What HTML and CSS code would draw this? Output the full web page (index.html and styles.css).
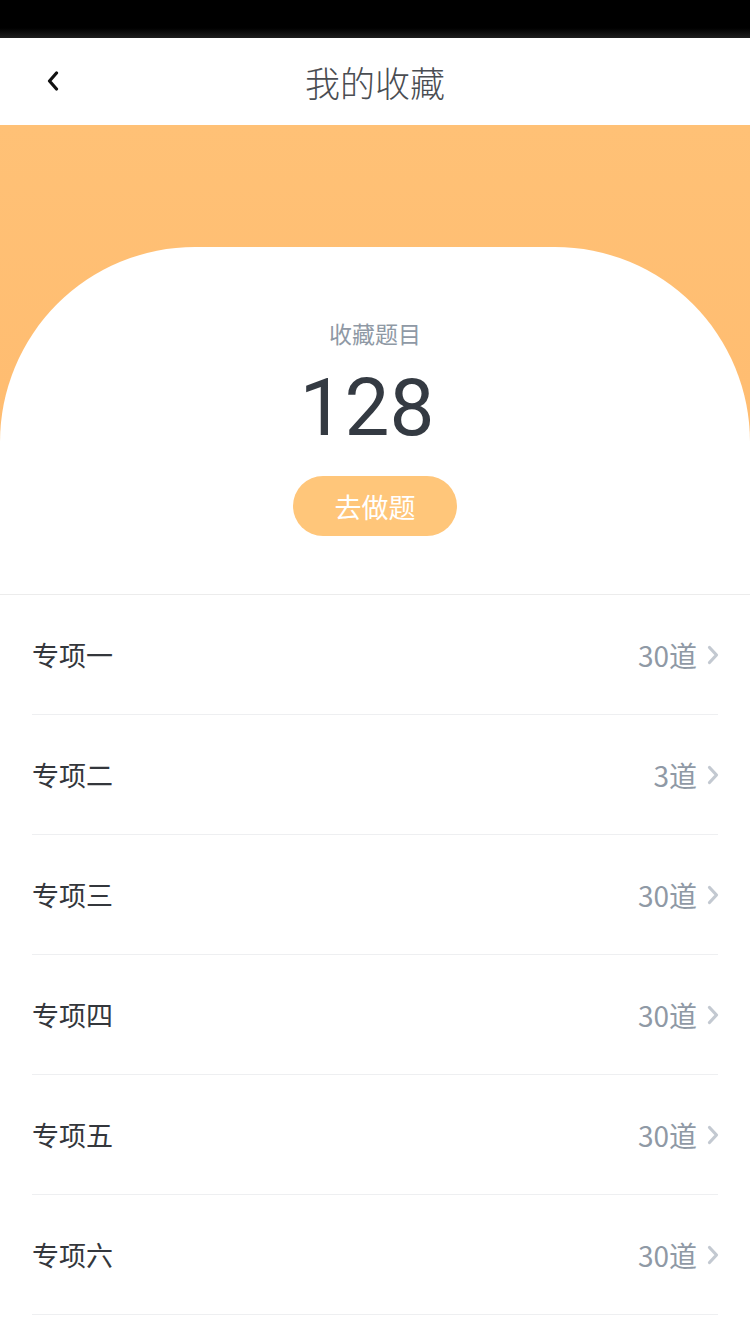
FILE: index.html
```html
<!DOCTYPE html>
<html lang="zh">
<head>
<meta charset="utf-8">
<title>我的收藏</title>
<link rel="stylesheet" href="styles.css">
</head>
<body>
<div class="statusbar"></div>
<header class="header">
  <a class="back" href="#">
    <svg width="14" height="20" viewBox="0 0 14 20"><path d="M10.5 2 L3.5 10 L10.5 18" fill="none" stroke="#111" stroke-width="3.2" stroke-linecap="round" stroke-linejoin="round"/></svg>
  </a>
  <h1 class="title">我的收藏</h1>
</header>
<section class="hero">
  <div class="card">
    <div class="card-label">收藏题目</div>
    <div class="card-num">128</div>
    <button class="btn">去做题</button>
  </div>
</section>
<ul class="list">
  <li class="row"><span class="name">专项一</span><span class="count">30道</span><svg class="chev" width="14" height="22" viewBox="0 0 14 22"><path d="M3.5 3.5 L10.5 11 L3.5 18.5" fill="none" stroke="#c3c9d1" stroke-width="3.2" stroke-linecap="round" stroke-linejoin="round"/></svg></li>
  <li class="row"><span class="name">专项二</span><span class="count">3道</span><svg class="chev" width="14" height="22" viewBox="0 0 14 22"><path d="M3.5 3.5 L10.5 11 L3.5 18.5" fill="none" stroke="#c3c9d1" stroke-width="3.2" stroke-linecap="round" stroke-linejoin="round"/></svg></li>
  <li class="row"><span class="name">专项三</span><span class="count">30道</span><svg class="chev" width="14" height="22" viewBox="0 0 14 22"><path d="M3.5 3.5 L10.5 11 L3.5 18.5" fill="none" stroke="#c3c9d1" stroke-width="3.2" stroke-linecap="round" stroke-linejoin="round"/></svg></li>
  <li class="row"><span class="name">专项四</span><span class="count">30道</span><svg class="chev" width="14" height="22" viewBox="0 0 14 22"><path d="M3.5 3.5 L10.5 11 L3.5 18.5" fill="none" stroke="#c3c9d1" stroke-width="3.2" stroke-linecap="round" stroke-linejoin="round"/></svg></li>
  <li class="row"><span class="name">专项五</span><span class="count">30道</span><svg class="chev" width="14" height="22" viewBox="0 0 14 22"><path d="M3.5 3.5 L10.5 11 L3.5 18.5" fill="none" stroke="#c3c9d1" stroke-width="3.2" stroke-linecap="round" stroke-linejoin="round"/></svg></li>
  <li class="row"><span class="name">专项六</span><span class="count">30道</span><svg class="chev" width="14" height="22" viewBox="0 0 14 22"><path d="M3.5 3.5 L10.5 11 L3.5 18.5" fill="none" stroke="#c3c9d1" stroke-width="3.2" stroke-linecap="round" stroke-linejoin="round"/></svg></li>
</ul>
</body>
</html>
```
FILE: styles.css
```css
* { box-sizing: border-box; }
html, body {
  margin: 0;
  padding: 0;
  background: #fff;
  font-family: "Noto Sans CJK SC", "Noto Sans", sans-serif;
}
.statusbar {
  height: 38px;
  background: linear-gradient(to bottom, #000 0, #000 28px, #1e1e1e 38px);
}
.header {
  height: 87px;
  display: flex;
  align-items: center;
  justify-content: center;
  position: relative;
  background: #fff;
}
.back {
  position: absolute;
  left: 46px;
  top: 33px;
  display: block;
  line-height: 0;
}
.title {
  margin: 0;
  font-size: 35px;
  font-weight: 300;
  color: #4a4d52;
  letter-spacing: 0;
}
.hero {
  background: linear-gradient(to bottom, #ffc176 0, #ffbc70 320px);
  padding-top: 122px;
}
.card {
  background: #fff;
  border-radius: 195px 195px 0 0 / 195px 195px 0 0;
  padding: 69px 0 58px;
  display: flex;
  flex-direction: column;
  align-items: center;
}
.card-label {
  font-size: 23px;
  line-height: 34px;
  color: #8f99a5;
}
.card-num {
  margin-top: 13px;
  padding-right: 16px;
  font-family: Roboto, "Noto Sans", sans-serif;
  font-size: 80px;
  line-height: 90px;
  color: #343a42;
}
.btn {
  margin-top: 23px;
  width: 164px;
  height: 60px;
  border: 0;
  border-radius: 30px;
  background: #ffc67a;
  color: #fff;
  font-family: "Noto Sans CJK SC", sans-serif;
  font-size: 27px;
  padding: 0;
}
.list {
  list-style: none;
  margin: 0;
  padding: 0;
  border-top: 1px solid #ececec;
}
.row {
  margin: 0 32px;
  height: 120px;
  display: flex;
  align-items: center;
  border-bottom: 1px solid #eeeff1;
}
.name {
  flex: 1;
  font-size: 27px;
  color: #34373c;
}
.count {
  font-size: 28px;
  color: #8f99a5;
}
.chev {
  margin-left: 9px;
  margin-right: -2px;
}
```
